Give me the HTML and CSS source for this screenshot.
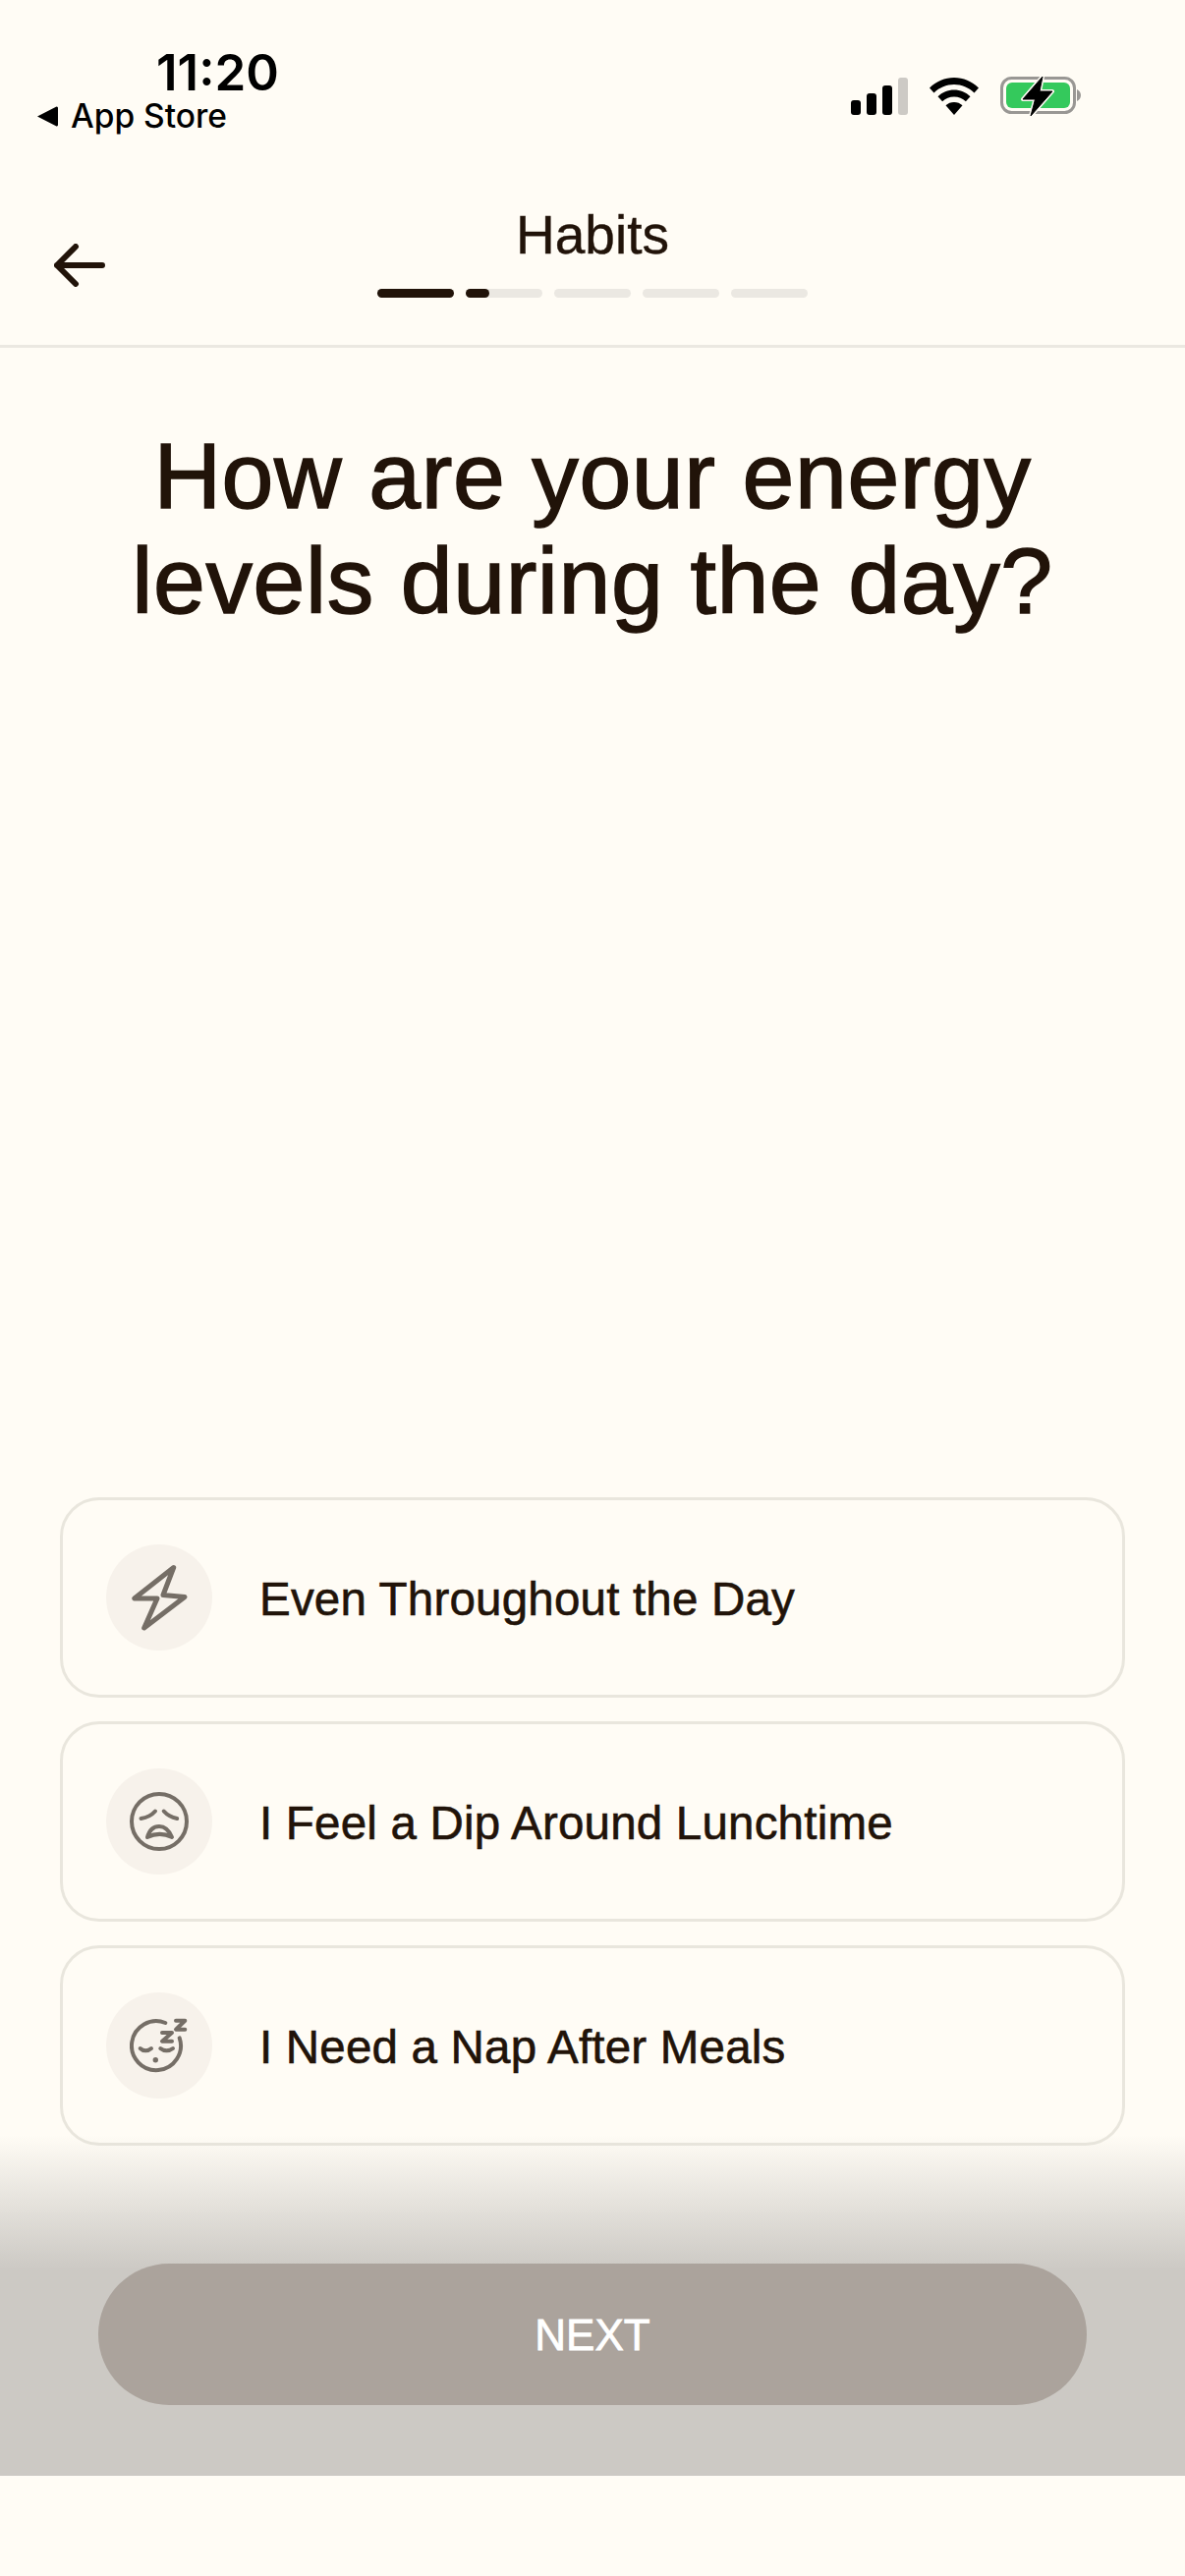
FILE: index.html
```html
<!DOCTYPE html>
<html lang="en">
<head>
    <meta charset="UTF-8">
    <meta name="viewport" content="width=device-width, initial-scale=1.0">
    <title>Habits</title>
    <link rel="stylesheet" href="styles.css">
</head>
<body>
    <div class="screen">
        <div class="status-bar">
            <div class="status-left">
                <div class="clock">11:20</div>
                <div class="back-app">
                    <svg class="back-app-icon" viewBox="0 0 21 21"><path d="M0 10.500 19 .8a1.300 1.300 0 0 1 2 1.200v17a1.300 1.300 0 0 1-2 1.200z"/></svg>
                    <span>App Store</span>
                </div>
            </div>
            <div class="status-right">
                <svg class="signal" viewBox="0 0 58 38">
                    <rect x="0" y="23" width="10" height="15" rx="3"/>
                    <rect x="16" y="16" width="10" height="22" rx="3"/>
                    <rect x="32" y="8" width="10" height="30" rx="3"/>
                    <rect x="48" y="0" width="10" height="38" rx="3" fill="#cdcac5"/>
                </svg>
                <svg class="wifi" viewBox="0 0 50 38">
                    <path d="M25 0C15.500 0 7 3.600 0 10.500l4.500 5C10.200 10 17.200 7 25 7s14.800 3 20.500 8.500l4.500-5C43 3.600 34.500 0 25 0z"/>
                    <path d="M25 12.500c-6.300 0-12 2.400-16.500 6.700l4.600 5C16.300 21.200 20.400 19.500 25 19.500s8.700 1.700 11.900 4.700l4.600-5C37 14.900 31.300 12.500 25 12.500z"/>
                    <path d="M25 25c-3.300 0-6.200 1.200-8.500 3.300L25 38l8.500-9.700C31.200 26.200 28.300 25 25 25z"/>
                </svg>
                <svg class="battery" viewBox="0 0 82 40">
                    <rect x="1.500" y="1.500" width="74" height="35" rx="10" fill="none" stroke="#999794" stroke-width="3"/>
                    <path d="M78 13v12c2.200-.8 4-3.400 4-6s-1.800-5.200-4-6z" fill="#999794"/>
                    <rect x="6" y="6" width="65" height="26" rx="6" fill="#34c95c"/>
                    <path d="M43 0 23 23h12.500L31 40l22-25H40z" fill="#fffcf5" stroke="#fffcf5" stroke-width="4" stroke-linejoin="round"/>
                    <path d="M43 0 23 23h12.500L31 40l22-25H40z" stroke="#000" stroke-width="1" stroke-linejoin="round"/>
                </svg>
            </div>
        </div>

        <header class="nav">
            <button class="back-btn" aria-label="Back">
                <svg viewBox="0 0 52 44" fill="none" stroke="#211309" stroke-width="6" stroke-linecap="round" stroke-linejoin="round"><path d="M22 3 3 22l19 19M3 22h46"/></svg>
            </button>
            <div class="nav-title">Habits</div>
            <div class="progress">
                <div class="progress-seg"><div class="progress-fill full"></div></div>
                <div class="progress-seg"><div class="progress-fill part"></div></div>
                <div class="progress-seg"></div>
                <div class="progress-seg"></div>
                <div class="progress-seg"></div>
            </div>
        </header>

        <main class="content">
            <h1>How are your energy<br>levels during the day?</h1>

            <div class="options">
                <div class="option">
                    <div class="option-icon">
                        <svg class="icon-bolt" viewBox="0 0 60 68" fill="none" stroke="#756e66" stroke-width="5" stroke-linecap="round" stroke-linejoin="round"><path d="M44.700 3.500 4.700 35H28l-13.300 30L56 33.500l-22-2z"/></svg>
                    </div>
                    <span>Even Throughout the Day</span>
                </div>
                <div class="option">
                    <div class="option-icon">
                        <svg class="icon-face" viewBox="0 0 62 62" fill="none" stroke="#756e66" stroke-width="4" stroke-linecap="round" stroke-linejoin="round">
                            <circle cx="31" cy="31" r="28"/>
                            <path d="M12.500 28c6-1 11-3.500 14.500-7.500M35.700 20.500c3.500 4 8.500 6.500 13.500 7.500"/>
                            <path d="M19 47c2-7 6-11 12-11s10 4 13 11c-8-4-17-4-25 0z"/>
                        </svg>
                    </div>
                    <span>I Feel a Dip Around Lunchtime</span>
                </div>
                <div class="option">
                    <div class="option-icon">
                        <svg class="icon-sleep" viewBox="0 0 60 60" fill="none" stroke="#756e66" stroke-width="4" stroke-linecap="round" stroke-linejoin="round">
                            <path d="M36.300 7A25 25 0 1 0 50.700 22.300"/>
                            <path d="M10.700 33c3 3 8 3 11.300 0M31.300 33c3.500 3 9 3 12.700 0"/>
                            <circle cx="26.300" cy="44.700" r="2.700" fill="#756e66" stroke="none"/>
                            <path d="M33 17h10L33 25.700h10M47 4.700h9.300L47 13.700h9.300"/>
                        </svg>
                    </div>
                    <span>I Need a Nap After Meals</span>
                </div>
            </div>
        </main>

        <div class="footer">
            <button class="next-btn">NEXT</button>
        </div>
    </div>
</body>
</html>
```

FILE: styles.css
```css
* {
    box-sizing: border-box;
}
body {
    margin: 0;
    background-color: #fffcf5;
    color: #211309;
    font-family: "Liberation Sans", Arial, sans-serif;
}
.screen {
    display: flex;
    flex-direction: column;
    height: 2622px;
    overflow: hidden;
}
.status-bar {
    display: flex;
    justify-content: space-between;
    height: 176px;
    padding: 44px 106px 0 38px;
    color: #000;
    font-family: Inter, sans-serif;
}
.clock {
    margin-left: 121px;
    font-size: 51px;
    font-weight: 600;
    line-height: 60px;
}
.back-app {
    display: flex;
    align-items: center;
    gap: 13px;
    margin-top: -4px;
    font-size: 33.500px;
    font-weight: 500;
    line-height: 36px;
}
.back-app-icon {
    width: 21px;
    height: 21px;
}
.status-right {
    display: flex;
    align-items: flex-start;
    gap: 22px;
    padding-top: 34px;
}
.signal {
    width: 58px;
    height: 38px;
    margin-top: 1px;
}
.wifi {
    width: 50px;
    height: 38px;
    margin-top: 1px;
}
.battery {
    width: 82px;
    height: 40px;
}
.nav {
    position: relative;
    display: flex;
    flex-direction: column;
    align-items: center;
    height: 178px;
    border-bottom: 3px solid #ebe8e1;
    padding-top: 33px;
}
.back-btn {
    position: absolute;
    left: 55px;
    top: 72px;
    width: 52px;
    height: 44px;
    padding: 0;
    border: none;
    background: none;
}
.nav-title {
    font-size: 55px;
    line-height: 60px;
    -webkit-text-stroke: 0.4px #211309;
}
.progress {
    display: flex;
    gap: 12px;
    margin-top: 25px;
}
.progress-seg {
    width: 78px;
    height: 9px;
    border-radius: 5px;
    background-color: #ebe8e2;
}
.progress-fill {
    height: 100%;
    border-radius: 5px;
    background-color: #211309;
}
.progress-fill.full {
    width: 100%;
}
.progress-fill.part {
    width: 24px;
}
.content {
    display: flex;
    flex: 1;
    flex-direction: column;
    justify-content: space-between;
    padding: 77px 61px 0;
}
h1 {
    margin: 0;
    font-size: 95px;
    font-weight: 400;
    letter-spacing: 0.6px;
    line-height: 107px;
    text-align: center;
    -webkit-text-stroke: 1.5px #211309;
}
.options {
    display: flex;
    flex-direction: column;
    gap: 24px;
}
.option {
    display: flex;
    align-items: center;
    gap: 48px;
    height: 204px;
    padding: 0 44px;
    border: 3px solid #e9e6dd;
    border-radius: 40px;
    font-size: 47.500px;
    letter-spacing: 0.2px;
    -webkit-text-stroke: 0.6px #211309;
}
.option span {
    padding-top: 2px;
}
.option-icon {
    display: flex;
    align-items: center;
    justify-content: center;
    width: 108px;
    height: 108px;
    border-radius: 50%;
    background-color: #f7f2eb;
}
.icon-bolt {
    width: 60px;
    height: 68px;
}
.icon-face {
    width: 62px;
    height: 62px;
}
.icon-sleep {
    width: 60px;
    height: 60px;
}
.footer {
    position: relative;
    z-index: 1;
    height: 347px;
    margin-top: -11px;
    margin-bottom: 102px;
    padding: 131px 100px 0;
    background: linear-gradient(to bottom, rgba(204, 201, 196, 0), #ccc9c4 137px);
}
.next-btn {
    display: block;
    width: 100%;
    height: 144px;
    border: none;
    border-radius: 72px;
    background-color: #aba39c;
    color: #fff;
    font-family: inherit;
    font-size: 44px;
    padding-top: 3px;
    -webkit-text-stroke: 0.8px #fff;
}
```
